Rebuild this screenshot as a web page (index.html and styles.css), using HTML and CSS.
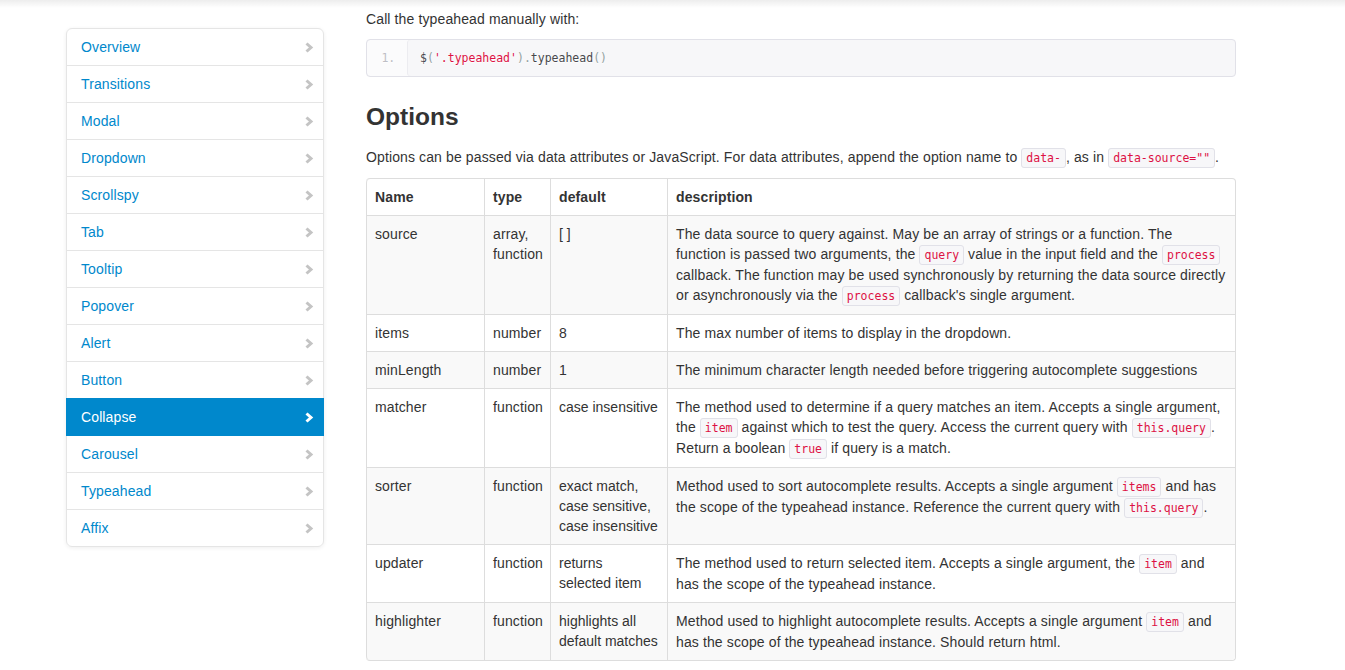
FILE: index.html
```html
<!DOCTYPE html>
<html>
<head>
<meta charset="utf-8">
<link rel="stylesheet" href="styles.css">
</head>
<body>
<div class="topshade"></div>
<div class="container">
  <aside class="sidebar">
    <ul class="sidenav">
      <li><a href="#">Overview<svg class="chev" viewBox="0 0 9 11"><polyline points="1.5,1.5 6,5.5 1.5,9.5"/></svg></a></li>
      <li><a href="#">Transitions<svg class="chev" viewBox="0 0 9 11"><polyline points="1.5,1.5 6,5.5 1.5,9.5"/></svg></a></li>
      <li><a href="#">Modal<svg class="chev" viewBox="0 0 9 11"><polyline points="1.5,1.5 6,5.5 1.5,9.5"/></svg></a></li>
      <li><a href="#">Dropdown<svg class="chev" viewBox="0 0 9 11"><polyline points="1.5,1.5 6,5.5 1.5,9.5"/></svg></a></li>
      <li><a href="#">Scrollspy<svg class="chev" viewBox="0 0 9 11"><polyline points="1.5,1.5 6,5.5 1.5,9.5"/></svg></a></li>
      <li><a href="#">Tab<svg class="chev" viewBox="0 0 9 11"><polyline points="1.5,1.5 6,5.5 1.5,9.5"/></svg></a></li>
      <li><a href="#">Tooltip<svg class="chev" viewBox="0 0 9 11"><polyline points="1.5,1.5 6,5.5 1.5,9.5"/></svg></a></li>
      <li><a href="#">Popover<svg class="chev" viewBox="0 0 9 11"><polyline points="1.5,1.5 6,5.5 1.5,9.5"/></svg></a></li>
      <li><a href="#">Alert<svg class="chev" viewBox="0 0 9 11"><polyline points="1.5,1.5 6,5.5 1.5,9.5"/></svg></a></li>
      <li><a href="#">Button<svg class="chev" viewBox="0 0 9 11"><polyline points="1.5,1.5 6,5.5 1.5,9.5"/></svg></a></li>
      <li class="active"><a href="#">Collapse<svg class="chev" viewBox="0 0 9 11"><polyline points="1.5,1.5 6,5.5 1.5,9.5"/></svg></a></li>
      <li><a href="#">Carousel<svg class="chev" viewBox="0 0 9 11"><polyline points="1.5,1.5 6,5.5 1.5,9.5"/></svg></a></li>
      <li><a href="#">Typeahead<svg class="chev" viewBox="0 0 9 11"><polyline points="1.5,1.5 6,5.5 1.5,9.5"/></svg></a></li>
      <li><a href="#">Affix<svg class="chev" viewBox="0 0 9 11"><polyline points="1.5,1.5 6,5.5 1.5,9.5"/></svg></a></li>
    </ul>
  </aside>
  <main class="content">
    <p>Call the typeahead manually with:</p>
    <pre class="prettyprint"><ol class="linenums"><li><span class="pln">$</span><span class="pun">(</span><span class="str">'.typeahead'</span><span class="pun">).</span><span class="pln">typeahead</span><span class="pun">()</span></li></ol></pre>
    <h3>Options</h3>
    <p>Options can be passed via data attributes or JavaScript. For data attributes, append the option name to <code>data-</code>, as in <code>data-source=""</code>.</p>
    <table class="opts">
      <thead>
        <tr><th class="c-name">Name</th><th class="c-type">type</th><th class="c-def">default</th><th class="c-desc">description</th></tr>
      </thead>
      <tbody>
        <tr><td>source</td><td>array, function</td><td class="def">[ ]</td><td class="desc">The data source to query against. May be an array of strings or a function. The<br>function is passed two arguments, the <code>query</code> value in the input field and the <code>process</code> callback. The function may be used synchronously by returning the data source directly or asynchronously via the <code>process</code> callback's single argument.</td></tr>
        <tr><td>items</td><td>number</td><td class="def">8</td><td class="desc">The max number of items to display in the dropdown.</td></tr>
        <tr><td>minLength</td><td>number</td><td class="def">1</td><td class="desc">The minimum character length needed before triggering autocomplete suggestions</td></tr>
        <tr><td>matcher</td><td>function</td><td class="def">case insensitive</td><td class="desc">The method used to determine if a query matches an item. Accepts a single argument, the <code>item</code> against which to test the query. Access the current query with <code>this.query</code>. Return a boolean <code>true</code> if query is a match.</td></tr>
        <tr><td>sorter</td><td>function</td><td class="def">exact match,<br>case sensitive,<br>case insensitive</td><td class="desc">Method used to sort autocomplete results. Accepts a single argument <code>items</code> and has the scope of the typeahead instance. Reference the current query with <code>this.query</code>.</td></tr>
        <tr><td>updater</td><td>function</td><td class="def">returns<br>selected item</td><td class="desc">The method used to return selected item. Accepts a single argument, the <code>item</code> and has the scope of the typeahead instance.</td></tr>
        <tr><td>highlighter</td><td>function</td><td class="def">highlights all<br>default matches</td><td class="desc">Method used to highlight autocomplete results. Accepts a single argument <code>item</code> and has the scope of the typeahead instance. Should return html.</td></tr>
      </tbody>
    </table>
  </main>
</div>
</body>
</html>
```
FILE: styles.css
```css
html, body {
  margin: 0;
  padding: 0;
}
body {
  font-family: "Liberation Sans", Arial, sans-serif;
  font-size: 14px;
  line-height: 20px;
  letter-spacing: 0.12px;
  color: #333;
  background: #fff;
}
.topshade {
  position: absolute;
  top: 0;
  left: 0;
  right: 0;
  height: 8px;
  background: linear-gradient(to bottom, rgba(0,0,0,0.07), rgba(0,0,0,0));
  pointer-events: none;
}
.container {
  display: flex;
  gap: 42px;
  padding-left: 66px;
  padding-top: 9px;
}
.sidebar {
  width: 258px;
  flex: none;
  padding-top: 19px;
}
.sidenav {
  list-style: none;
  margin: 0;
  padding: 0;
  background: #fff;
  border-radius: 6px;
  box-shadow: 0 1px 4px rgba(0,0,0,0.065);
}
.sidenav li a {
  display: flex;
  justify-content: space-between;
  align-items: center;
  margin: 0 0 -1px;
  padding: 8px 14px;
  border: 1px solid #e5e5e5;
  color: #0088cc;
  text-decoration: none;
}
.sidenav li:first-child a {
  border-radius: 6px 6px 0 0;
}
.sidenav li:last-child a {
  border-radius: 0 0 6px 6px;
}
.sidenav li.active a {
  position: relative;
  z-index: 2;
  background: #0088cc;
  border-color: #0088cc;
  color: #fff;
}
.chev {
  width: 9px;
  height: 11px;
  margin-right: -5px;
  fill: none;
  stroke: #c4c4c4;
  stroke-width: 3;
  stroke-linecap: butt;
  stroke-linejoin: miter;
}
.active .chev {
  stroke: #fff;
}
.content {
  width: 870px;
  flex: none;
}
.content p {
  margin: 0 0 10px;
}
pre.prettyprint {
  margin: 0 0 20px;
  padding: 8px 0;
  background: #f7f7f9;
  border: 1px solid #e1e1e8;
  border-radius: 4px;
  box-shadow: inset 40px 0 0 #fbfbfc, inset 41px 0 0 #ececf0;
  font-family: "DejaVu Sans Mono", "Liberation Mono", monospace;
  font-size: 11.5px;
  line-height: 20px;
  letter-spacing: 0;
}
ol.linenums {
  margin: 0 0 0 49px;
  padding: 0;
}
ol.linenums li {
  padding-left: 4px;
  color: #bebec5;
  line-height: 20px;
  text-shadow: 0 1px 0 #fff;
}
ol.linenums li::marker {
  content: "1.   ";
}
.pln { color: #48484c; }
.pun { color: #93a1a1; }
.str { color: #dd1144; }
h3 {
  margin: 10px 0;
  font-size: 24.5px;
  line-height: 40px;
  font-weight: bold;
  letter-spacing: 0;
  color: #333;
}
code {
  font-family: "DejaVu Sans Mono", "Liberation Mono", monospace;
  font-size: 11.5px;
  letter-spacing: 0;
  padding: 2px 4px;
  color: #d14;
  background: #f7f7f9;
  border: 1px solid #e1e1e8;
  border-radius: 3px;
  line-height: 20px;
}
table.opts {
  width: 100%;
  border-collapse: separate;
  border-spacing: 0;
  border: 1px solid #ddd;
  border-left: 0;
  border-radius: 4px;
  margin-top: 2px;
  table-layout: fixed;
}
table.opts th,
table.opts td {
  padding: 8px;
  line-height: 20px;
  text-align: left;
  vertical-align: top;
  border-left: 1px solid #ddd;
  border-top: 1px solid #ddd;
}
table.opts td.def {
  letter-spacing: 0;
  white-space: nowrap;
}
table.opts td.desc {
  padding-right: 7px;
}
table.opts thead th {
  border-top: 0;
  font-weight: bold;
}
table.opts tbody tr:nth-child(odd) td {
  background: #f9f9f9;
}
table.opts .c-name { width: 101px; }
table.opts .c-type { width: 49px; }
table.opts .c-def { width: 100px; }
table.opts tbody tr:last-child td:first-child {
  border-bottom-left-radius: 4px;
}
table.opts tbody tr:last-child td:last-child {
  border-bottom-right-radius: 4px;
}
table.opts thead th:first-child {
  border-top-left-radius: 4px;
}
```
